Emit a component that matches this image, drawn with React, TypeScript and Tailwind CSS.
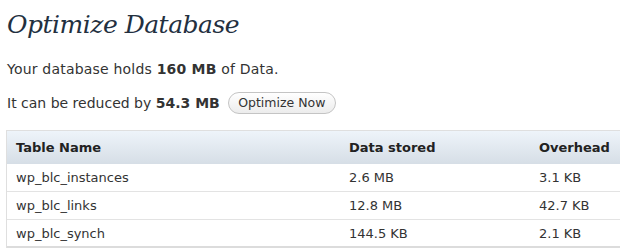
import React from "react";

const rows = [
  ["wp_blc_instances", "2.6 MB", "3.1 KB"],
  ["wp_blc_links", "12.8 MB", "42.7 KB"],
  ["wp_blc_synch", "144.5 KB", "2.1 KB"],
];

export default function App() {
  return (
    <div className="w-[620px] h-[250px] overflow-hidden bg-white" style={{ fontFamily: '"DejaVu Sans", Verdana, sans-serif' }}>
      <div className="pl-[7px] pt-[6px]">
        <h2
          className="text-[25px] italic leading-[38px] tracking-[-0.5px] text-[#23303f] h-[48px]"
          style={{ fontFamily: '"DejaVu Serif", Georgia, serif' }}
        >
          Optimize Database
        </h2>
        <p className="text-[14px] leading-[20px] tracking-[0.2px] text-[#333] h-[34px] pt-[5px]">
          Your database holds <b>160 MB</b> of Data.
        </p>
        <div className="flex items-center h-[30px] text-[14px] text-[#333]">
          <span>
            It can be reduced by <b>54.3 MB</b>
          </span>
          <button className="ml-[8px] h-[22px] w-[108px] rounded-full border border-[#c4c4c4] bg-gradient-to-b from-white to-[#ececec] text-[12.5px] text-[#333] leading-[20px]">
            Optimize Now
          </button>
        </div>
      </div>
      <div className="ml-[6px] mt-[12px] w-[700px] border-l border-t border-[#dfdfdf]">
        <div className="grid grid-cols-[333px_190px_1fr] h-[33px] items-center bg-gradient-to-b from-[#eef4fa] to-[#d6dee6] text-[13px] font-bold text-[#222]">
          <div className="pl-[9px]">Table Name</div>
          <div className="pl-[9px]">Data stored</div>
          <div className="pl-[9px]">Overhead</div>
        </div>
        {rows.map((r, i) => (
          <div
            key={r[0]}
            className={`grid grid-cols-[333px_190px_1fr] h-[28px] items-center text-[13px] text-[#333] border-t border-white ${i === rows.length - 1 ? "border-b-2 border-b-[#dcdcdc]" : "border-b border-b-[#e3e3e3]"}`}
          >
            <div className="pl-[9px]">{r[0]}</div>
            <div className="pl-[9px]">{r[1]}</div>
            <div className="pl-[9px]">{r[2]}</div>
          </div>
        ))}
      </div>
    </div>
  );
}
